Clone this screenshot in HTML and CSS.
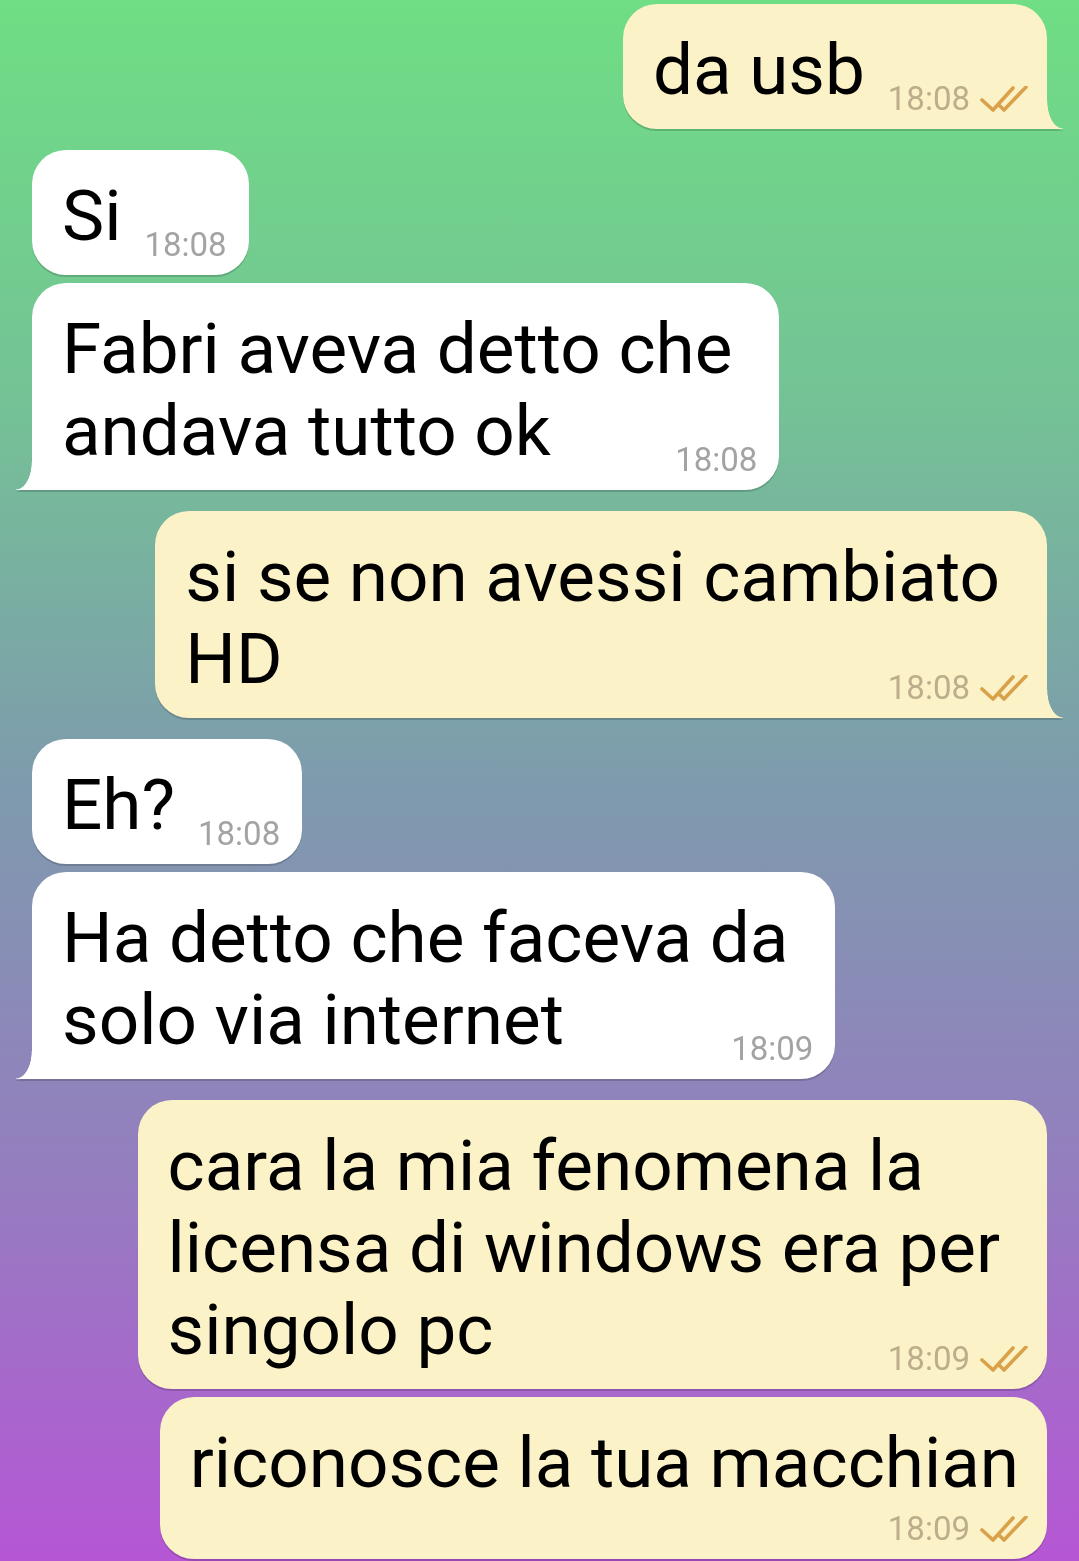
FILE: index.html
```html
<!DOCTYPE html>
<html lang="it">
<head>
  <meta charset="UTF-8">
  <title>Chat</title>
  <link rel="stylesheet" href="styles.css">
</head>
<body>

<div class="chat">

  <div class="bubble out tail">
    da usb<span class="meta"><span class="time">18:08</span><svg class="check" viewBox="0 0 48 26"><path d="M2 14 L13 24 L33 2 M20 20 L24 24 L46 1"/></svg></span>
  </div>

  <div class="bubble in new-group">
    Si<span class="meta"><span class="time">18:08</span></span>
  </div>
  <div class="bubble in tail">
    Fabri aveva detto che<br>andava tutto ok<span class="meta"><span class="time">18:08</span></span>
  </div>

  <div class="bubble out tail new-group">
    si se non avessi cambiato<br>HD<span class="meta"><span class="time">18:08</span><svg class="check" viewBox="0 0 48 26"><path d="M2 14 L13 24 L33 2 M20 20 L24 24 L46 1"/></svg></span>
  </div>

  <div class="bubble in new-group">
    Eh?<span class="meta"><span class="time">18:08</span></span>
  </div>
  <div class="bubble in tail">
    Ha detto che faceva da<br>solo via internet<span class="meta"><span class="time">18:09</span></span>
  </div>

  <div class="bubble out new-group">
    cara la mia fenomena la<br>licensa di windows era per<br>singolo pc<span class="meta"><span class="time">18:09</span><svg class="check" viewBox="0 0 48 26"><path d="M2 14 L13 24 L33 2 M20 20 L24 24 L46 1"/></svg></span>
  </div>
  <div class="bubble out long">
    riconosce la tua macchian<br><span class="meta below"><span class="time">18:09</span><svg class="check" viewBox="0 0 48 26"><path d="M2 14 L13 24 L33 2 M20 20 L24 24 L46 1"/></svg></span>
  </div>

</div>

</body>
</html>
```

FILE: styles.css
```css
html, body {
  height: 100%;
}
body {
  margin: 0;
  font-family: Roboto, 'Noto Sans', sans-serif;
  background: linear-gradient(to bottom, #6fde84 0%, #74c395 25%, #7e9bad 50%, #947ebf 75%, #b656d5 100%);
  overflow: hidden;
}
.chat {
  display: flex;
  flex-direction: column;
  gap: 8px;
  padding: 4px 32px 0;
}
.bubble {
  position: relative;
  display: flow-root;
  width: fit-content;
  padding: 25px 47px 10px 30px;
  border-radius: 34px;
  font-size: 71px;
  line-height: 82px;
  color: #000;
  filter: drop-shadow(0 2px 0.6px rgba(0, 0, 0, 0.16));
}
.bubble.in {
  background: #fff;
  align-self: flex-start;
}
.bubble.out {
  background: #fcf2c8;
  align-self: flex-end;
}
.new-group {
  margin-top: 13px;
}
.bubble.long {
  padding-right: 28px;
}

/* tails */
.bubble.tail::before {
  content: "";
  position: absolute;
  bottom: 0;
  width: 17px;
  height: 28px;
}
.bubble.in.tail {
  border-bottom-left-radius: 0;
}
.bubble.in.tail::before {
  left: -16px;
  background: radial-gradient(16px 28px at 0 0, transparent 96%, #fff 100%);
}
.bubble.out.tail {
  border-bottom-right-radius: 0;
}
.bubble.out.tail::before {
  right: -16px;
  background: radial-gradient(16px 28px at 100% 0, transparent 96%, #fcf2c8 100%);
}

/* time + ticks */
.meta {
  float: right;
  margin: 50px -25px 0 23px;
  font-size: 33px;
  line-height: 40px;
  color: #a3a3a3;
  white-space: nowrap;
}
.out .meta {
  margin-right: -28px;
  color: #bcad8b;
}
.long .meta {
  margin-right: -9px;
}
.meta.below {
  margin-top: 5px;
}
.check {
  width: 48px;
  height: 26px;
  margin-left: 10px;
  vertical-align: -2px;
  fill: none;
  stroke: #d9a149;
  stroke-width: 3.6;
  stroke-linecap: round;
  stroke-linejoin: round;
}
```
